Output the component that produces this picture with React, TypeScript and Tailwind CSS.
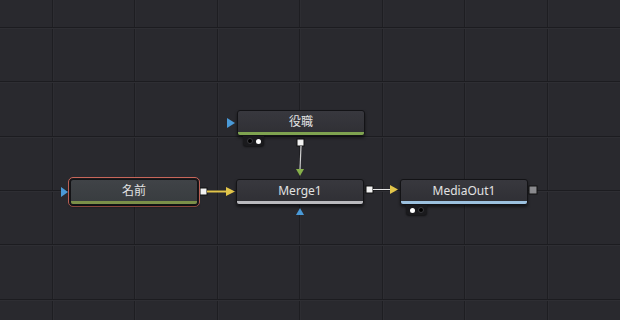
import React from "react";

const FONT = '"Noto Sans", "Noto Sans CJK JP", sans-serif';

const vLines = [52, 134, 217, 299, 382, 464, 547];
const hLines = [27, 81, 136, 190, 244, 299];

type NodeProps = {
  label: string;
  x: number;
  y: number;
  bar: string;
  selected?: boolean;
};

function FlowNode({ label, x, y, bar, selected }: NodeProps) {
  const body = (
    <div
      className={`flex h-[26px] w-[128px] flex-col overflow-hidden rounded-[3px] border border-[#131316] shadow-[0_2px_3px_rgba(0,0,0,0.5)] ${
        selected ? "bg-gradient-to-b from-[#404347] to-[#383c3f]" : "bg-gradient-to-b from-[#38383e] to-[#2f2f34]"
      }`}
    >
      <div className="flex flex-1 items-center justify-center text-[12px] text-[#e2e2e2]" style={{ fontFamily: FONT }}>
        {label}
      </div>
      <div className={`h-[3px] ${bar}`} />
    </div>
  );

  if (selected) {
    return (
      <div
        className="absolute rounded-[5px] border border-[#c8665a] bg-[#1c1c1f] p-px"
        style={{ left: x - 2, top: y - 2 }}
      >
        {body}
      </div>
    );
  }

  return (
    <div className="absolute" style={{ left: x, top: y }}>
      {body}
    </div>
  );
}

function Badge({ x, y, whiteFirst }: { x: number; y: number; whiteFirst?: boolean }) {
  const black = <div className="h-[6px] w-[6px] rounded-full border border-[#3a3a3e] bg-black" />;
  const white = <div className="h-[5px] w-[5px] rounded-full bg-white" />;
  return (
    <div
      className="absolute flex h-[10px] w-[21px] items-center justify-center gap-[3px] rounded-b-[3px] bg-[#1a1a1d] shadow-[0_1px_2px_rgba(0,0,0,0.6)]"
      style={{ left: x, top: y }}
    >
      {whiteFirst ? white : black}
      {whiteFirst ? black : white}
    </div>
  );
}

export default function App() {
  return (
    <div className="relative h-[320px] w-[620px] overflow-hidden bg-[#29292e]">
      <svg className="absolute inset-0" width={620} height={320}>
        {vLines.map((x) => (
          <g key={`v${x}`}>
            <rect x={x} y={0} width={1} height={320} fill="#1e1e22" />
            <rect x={x + 1} y={0} width={1} height={320} fill="#2d2d32" />
          </g>
        ))}
        {hLines.map((y) => (
          <g key={`h${y}`}>
            <rect x={0} y={y} width={620} height={1} fill="#1c1c20" />
            <rect x={0} y={y + 1} width={620} height={1} fill="#2e2e33" />
          </g>
        ))}

        {/* input arrows */}
        <polygon points="227,118 235,123 227,128" fill="#4a9ad8" />
        <polygon points="61,187 68,192 61,197" fill="#4a9ad8" />
        <polygon points="296,215 300,208 304,215" fill="#4a9ad8" />

        {/* 役職 -> Merge1 */}
        <rect x={297} y={139} width={7} height={7} fill="#f2f2f2" stroke="#111" strokeWidth={1} />
        <line x1={301} y1={146} x2={300} y2={169} stroke="#cfcfcf" strokeWidth={1.2} />
        <polygon points="296,169 304,169 300,176" fill="#86b04a" />

        {/* 名前 -> Merge1 */}
        <rect x={200} y={188} width={7} height={7} fill="#f2f2f2" stroke="#111" strokeWidth={1} />
        <line x1={207} y1={191.5} x2={226} y2={191.5} stroke="#e2c54a" strokeWidth={2} />
        <polygon points="226,187 235,191.5 226,196" fill="#e2c54a" />

        {/* Merge1 -> MediaOut1 */}
        <rect x={366} y={186} width={7} height={7} fill="#f2f2f2" stroke="#111" strokeWidth={1} />
        <line x1={373} y1={189.5} x2={390} y2={189.5} stroke="#e6e6e6" strokeWidth={1} />
        <polygon points="390,185 398,189.5 390,194" fill="#e2c54a" />

        {/* MediaOut1 output */}
        <rect x={529} y={186} width={8} height={8} fill="#8a8a8e" stroke="#111" strokeWidth={1} />
      </svg>

      <FlowNode label="役職" x={237} y={110} bar="bg-[#7fa350]" />
      <Badge x={243} y={136} />

      <FlowNode label="名前" x={70} y={179} bar="bg-[#7b8f48]" selected />
      <FlowNode label="Merge1" x={236} y={179} bar="bg-[#b9b9bd]" />
      <FlowNode label="MediaOut1" x={400} y={179} bar="bg-[#9cc1df]" />
      <Badge x={406} y={205} whiteFirst />
    </div>
  );
}
